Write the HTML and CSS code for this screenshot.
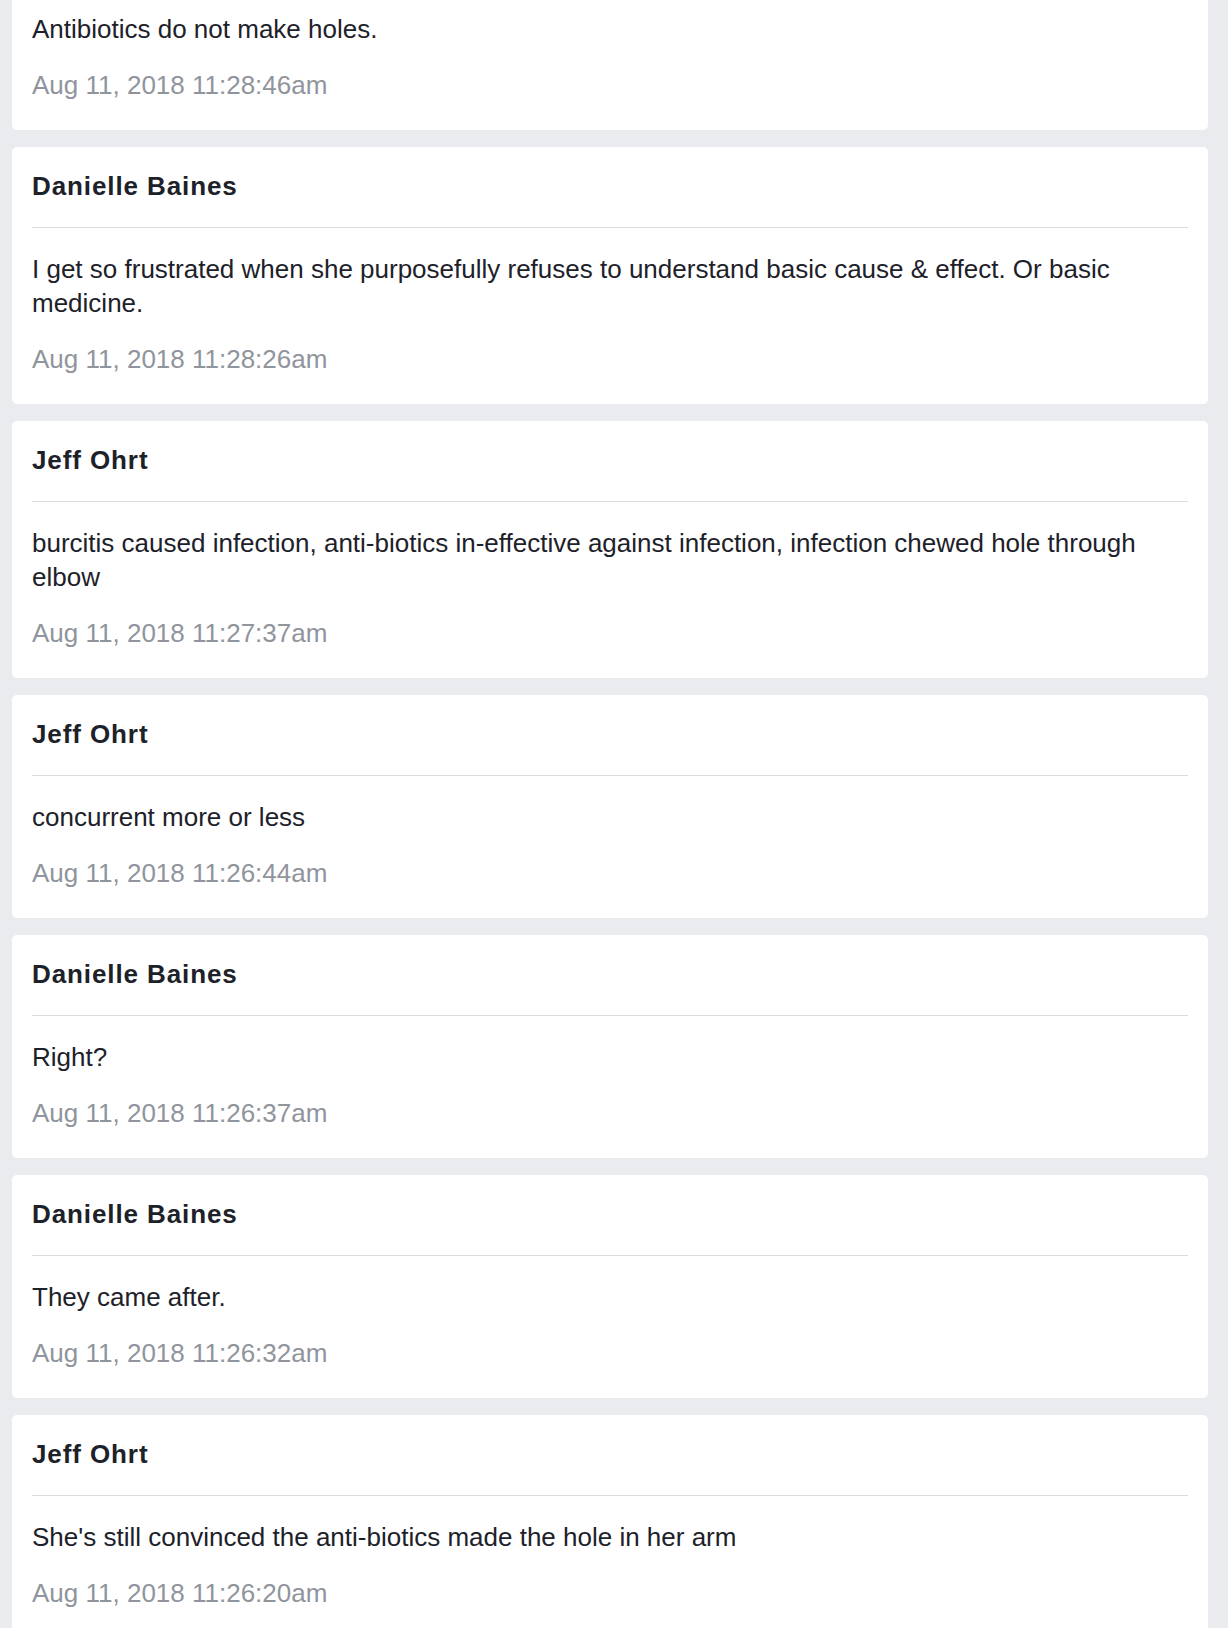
FILE: index.html
```html
<!DOCTYPE html>
<html>
<head>
<meta charset="utf-8">
<link rel="stylesheet" href="styles.css">
</head>
<body>
<div class="feed">
  <div class="card">
    <div class="card-head"><span class="name">Jeff Ohrt</span></div>
    <div class="card-body">
      <p class="msg">Antibiotics do not make holes.</p>
      <p class="time">Aug 11, 2018 11:28:46am</p>
    </div>
  </div>
  <div class="card">
    <div class="card-head"><span class="name">Danielle Baines</span></div>
    <div class="card-body">
      <p class="msg">I get so frustrated when she purposefully refuses to understand basic cause &amp; effect. Or basic medicine.</p>
      <p class="time">Aug 11, 2018 11:28:26am</p>
    </div>
  </div>
  <div class="card">
    <div class="card-head"><span class="name">Jeff Ohrt</span></div>
    <div class="card-body">
      <p class="msg">burcitis caused infection, anti-biotics in-effective against infection, infection chewed hole through elbow</p>
      <p class="time">Aug 11, 2018 11:27:37am</p>
    </div>
  </div>
  <div class="card">
    <div class="card-head"><span class="name">Jeff Ohrt</span></div>
    <div class="card-body">
      <p class="msg">concurrent more or less</p>
      <p class="time">Aug 11, 2018 11:26:44am</p>
    </div>
  </div>
  <div class="card">
    <div class="card-head"><span class="name">Danielle Baines</span></div>
    <div class="card-body">
      <p class="msg">Right?</p>
      <p class="time">Aug 11, 2018 11:26:37am</p>
    </div>
  </div>
  <div class="card">
    <div class="card-head"><span class="name">Danielle Baines</span></div>
    <div class="card-body">
      <p class="msg">They came after.</p>
      <p class="time">Aug 11, 2018 11:26:32am</p>
    </div>
  </div>
  <div class="card">
    <div class="card-head"><span class="name">Jeff Ohrt</span></div>
    <div class="card-body">
      <p class="msg">She's still convinced the anti-biotics made the hole in her arm</p>
      <p class="time">Aug 11, 2018 11:26:20am</p>
    </div>
  </div>
</div>
</body>
</html>
```

FILE: styles.css
```css
html, body {
  margin: 0;
  padding: 0;
  background: #e9ebee;
}
body {
  font-family: "Liberation Sans", Arial, Helvetica, sans-serif;
  font-size: 26px;
  line-height: 34px;
  color: #1d2129;
  overflow: hidden;
  height: 1628px;
}
.feed {
  display: flex;
  flex-direction: column;
  gap: 17px;
  padding: 0 20px 0 12px;
  margin-top: -93px;
}
.card {
  background: #ffffff;
  border-radius: 5px;
  padding: 0 20px;
}
.card-head {
  padding: 22px 0 24px;
  border-bottom: 1px solid #dadde1;
}
.name {
  font-weight: bold;
  letter-spacing: 0.9px;
  color: #1d2129;
}
.card-body {
  padding: 24px 0 28px;
}
.msg {
  margin: 0;
}
.time {
  margin: 22px 0 0;
  color: #90949c;
}
```
